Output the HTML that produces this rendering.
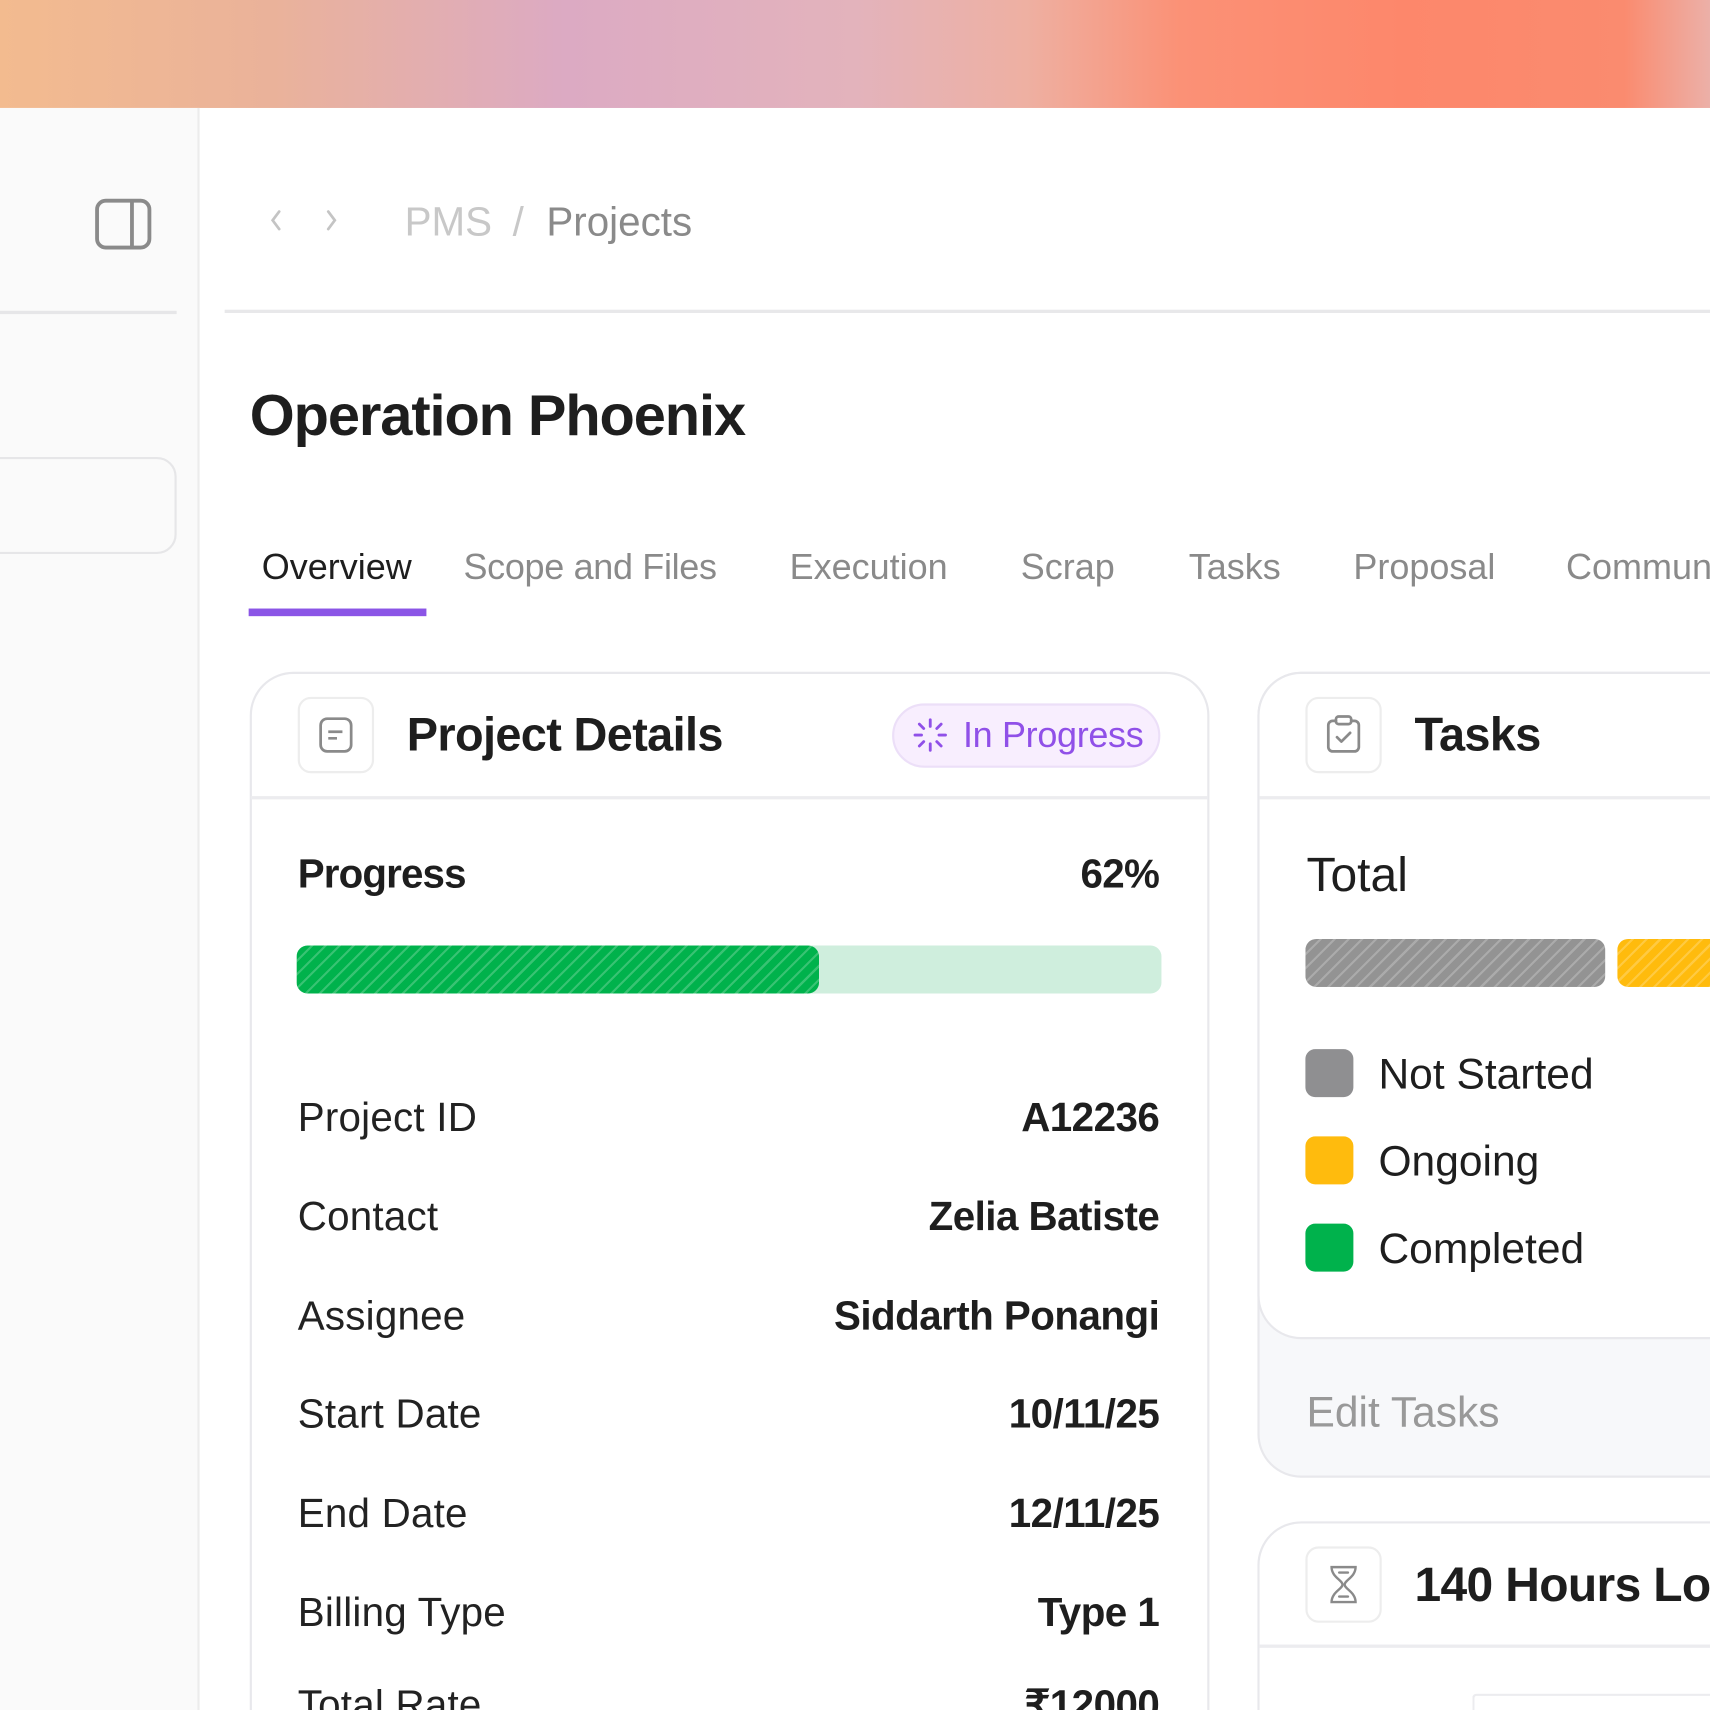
<!DOCTYPE html>
<html><head><meta charset="utf-8"><style>
*{box-sizing:border-box;margin:0;padding:0}
html,body{width:1710px;height:1710px;overflow:hidden;background:#fff}
#w{width:1568px;height:1568px;transform:scale(1.090561);transform-origin:0 0;position:relative;font-family:"Liberation Sans",sans-serif;color:#1e1e1e;overflow:hidden}
.a{position:absolute}
.grad{left:0;top:0;width:1568px;height:99px;background:linear-gradient(90deg,#f3bb8f 0%,#eab29a 16%,#dcaac3 33%,#e3b3bc 50%,#eeb0a2 60%,#fb9176 69%,#fd876b 82%,#fa8b6f 95%,#ecb0a8 100%)}
.side{left:0;top:99px;width:183px;height:1469px;background:#fafafa;border-right:2px solid #ececec}
.t{position:absolute;white-space:nowrap;line-height:1}
.b{font-weight:bold;letter-spacing:-0.6px}
.card{position:absolute;border:2px solid #e8e8ec;border-radius:40px;background:#fff}
.ib{position:absolute;width:70px;height:70px;border:2px solid #ededed;border-radius:12px;background:#fff}
.stripe{background-image:repeating-linear-gradient(135deg,rgba(255,255,255,.22) 0 2px,transparent 2px 9px)}
.lab{left:273px;font-size:37px;color:#222;letter-spacing:0.2px}
.val{right:505px;font-size:37px;font-weight:bold;color:#1e1e1e;text-align:right;letter-spacing:-0.5px}
</style></head><body><div id="w">
<div class="a grad"></div>
<div class="a side"></div>
<svg class="a" style="left:86px;top:181px" width="54" height="50" viewBox="0 0 54 50"><rect x="3" y="3" width="48" height="43" rx="8" fill="none" stroke="#8a8a8a" stroke-width="3.5"/><line x1="35" y1="3" x2="35" y2="46" stroke="#8a8a8a" stroke-width="3.5"/></svg>
<div class="a" style="left:0;top:285px;width:162px;height:3px;background:#e6e6e8"></div>
<div class="a" style="left:-30px;top:419px;width:192px;height:89px;border:2px solid #e6e6e8;border-radius:18px;background:#fafafa"></div>
<svg class="a" style="left:243px;top:190px" width="70" height="24" viewBox="0 0 70 24"><path d="M13 4 L7 12 L13 20" fill="none" stroke="#c4c4c4" stroke-width="2.5" stroke-linecap="round"/><path d="M58 4 L64 12 L58 20" fill="none" stroke="#c4c4c4" stroke-width="2.5" stroke-linecap="round"/></svg>
<div class="t" style="left:371px;top:185px;font-size:37px;color:#c8c8c8">PMS</div>
<div class="t" style="left:470px;top:185px;font-size:37px;color:#c8c8c8">/</div>
<div class="t" style="left:501px;top:185px;font-size:37px;color:#8a8a8a">Projects</div>
<div class="a" style="left:206px;top:284px;width:1362px;height:3px;background:#e8e8ea"></div>
<div class="t b" style="left:229px;top:355px;font-size:53px;letter-spacing:-1px;color:#1e1e1e">Operation Phoenix</div>
<div class="t" style="left:240px;top:503px;font-size:33px;color:#1e1e1e">Overview</div>
<div class="t" style="left:425px;top:503px;font-size:33px;color:#8a8a8a;letter-spacing:-0.3px">Scope and Files</div>
<div class="t" style="left:724px;top:503px;font-size:33px;color:#8a8a8a">Execution</div>
<div class="t" style="left:936px;top:503px;font-size:33px;color:#8a8a8a">Scrap</div>
<div class="t" style="left:1090px;top:503px;font-size:33px;color:#8a8a8a">Tasks</div>
<div class="t" style="left:1241px;top:503px;font-size:33px;color:#8a8a8a">Proposal</div>
<div class="t" style="left:1436px;top:503px;font-size:33px;color:#8a8a8a">Communication</div>
<div class="a" style="left:228px;top:558px;width:163px;height:7px;background:#8b55e6"></div>

<div class="card" style="left:229px;top:616px;width:880px;height:1000px"></div>
<div class="a" style="left:230px;top:730px;width:877px;height:3px;background:#ececef"></div>
<div class="ib" style="left:273px;top:639px"></div>
<svg class="a" style="left:290px;top:656px" width="36" height="36" viewBox="0 0 36 36"><rect x="4" y="3" width="28" height="30" rx="6" fill="none" stroke="#8a8a8a" stroke-width="2.5"/><line x1="11" y1="15" x2="24" y2="15" stroke="#8a8a8a" stroke-width="2.5"/><line x1="11" y1="21" x2="19" y2="21" stroke="#8a8a8a" stroke-width="2.5"/></svg>
<div class="t b" style="left:373px;top:653px;font-size:43px">Project Details</div>
<div class="a" style="left:818px;top:645px;width:246px;height:59px;background:#f8eefe;border:2px solid #ecdff8;border-radius:30px"></div>
<svg class="a" style="left:836px;top:657px" width="34" height="34" viewBox="0 0 34 34" stroke="#9050e8" stroke-width="2.6" stroke-linecap="round"><line x1="17" y1="3" x2="17" y2="9"/><line x1="17" y1="25" x2="17" y2="31"/><line x1="3" y1="17" x2="9" y2="17"/><line x1="25" y1="17" x2="31" y2="17"/><line x1="7" y1="7" x2="11" y2="11"/><line x1="23" y1="23" x2="27" y2="27"/><line x1="27" y1="7" x2="23" y2="11"/><line x1="7" y1="27" x2="11" y2="23"/></svg>
<div class="t" style="left:883px;top:657px;font-size:33px;color:#9050e8;letter-spacing:-0.3px">In Progress</div>
<div class="t b" style="left:273px;top:783px;font-size:37px;letter-spacing:-0.8px">Progress</div>
<div class="t b" style="right:505px;top:783px;font-size:37px">62%</div>
<div class="a" style="left:272px;top:867px;width:793px;height:44px;background:#cfeedd;border-radius:10px"></div>
<div class="a stripe" style="left:272px;top:867px;width:479px;height:44px;background-color:#00b24c;border-radius:10px"></div>
<div class="t lab" style="top:1006px">Project ID</div><div class="t val" style="top:1006px">A12236</div>
<div class="t lab" style="top:1097px">Contact</div><div class="t val" style="top:1097px">Zelia Batiste</div>
<div class="t lab" style="top:1188px">Assignee</div><div class="t val" style="top:1188px">Siddarth Ponangi</div>
<div class="t lab" style="top:1278px">Start Date</div><div class="t val" style="top:1278px">10/11/25</div>
<div class="t lab" style="top:1369px">End Date</div><div class="t val" style="top:1369px">12/11/25</div>
<div class="t lab" style="top:1460px">Billing Type</div><div class="t val" style="top:1460px">Type 1</div>
<div class="t lab" style="top:1545px">Total Rate</div><div class="t val" style="top:1545px">₹12000</div>

<div class="card" style="left:1153px;top:616px;width:500px;height:739px;background:#f7f8fa"></div>
<div class="card" style="left:1153px;top:616px;width:500px;height:612px"></div>
<div class="a" style="left:1155px;top:730px;width:420px;height:3px;background:#ececef"></div>
<div class="ib" style="left:1197px;top:639px"></div>
<svg class="a" style="left:1214px;top:655px" width="36" height="38" viewBox="0 0 36 38" fill="none" stroke="#8a8a8a" stroke-width="2.5" stroke-linecap="round" stroke-linejoin="round"><path d="M11 6 H8 a4 4 0 0 0 -4 4 V30 a4 4 0 0 0 4 4 H28 a4 4 0 0 0 4 -4 V10 a4 4 0 0 0 -4 -4 H25"/><rect x="11" y="2" width="14" height="7" rx="2.5"/><path d="M12 21 L16 25 L24 17"/></svg>
<div class="t b" style="left:1297px;top:653px;font-size:43px">Tasks</div>
<div class="t" style="left:1198px;top:781px;font-size:44px;font-weight:500">Total</div>
<div class="a stripe" style="left:1197px;top:861px;width:275px;height:44px;background-color:#939393;border-radius:10px"></div>
<div class="a stripe" style="left:1483px;top:861px;width:120px;height:44px;background-color:#ffbb0d;border-radius:10px"></div>
<div class="a" style="left:1197px;top:962px;width:44px;height:44px;background:#8f8f91;border-radius:9px"></div>
<div class="a" style="left:1197px;top:1042px;width:44px;height:44px;background:#ffbb0d;border-radius:9px"></div>
<div class="a" style="left:1197px;top:1122px;width:44px;height:44px;background:#00b24c;border-radius:9px"></div>
<div class="t" style="left:1264px;top:966px;font-size:39px">Not Started</div>
<div class="t" style="left:1264px;top:1046px;font-size:39px">Ongoing</div>
<div class="t" style="left:1264px;top:1126px;font-size:39px">Completed</div>
<div class="t" style="left:1198px;top:1276px;font-size:39px;color:#999">Edit Tasks</div>

<div class="card" style="left:1153px;top:1395px;width:500px;height:220px"></div>
<div class="a" style="left:1155px;top:1508px;width:413px;height:3px;background:#ececef"></div>
<div class="ib" style="left:1197px;top:1418px"></div>
<svg class="a" style="left:1214px;top:1434px" width="36" height="38" viewBox="0 0 36 38" fill="none" stroke="#8a8a8a" stroke-width="2.2" stroke-linecap="round"><path d="M7 3 H29 C29 12 19 15 19 19 C19 23 29 26 29 35 H7 C7 26 17 23 17 19 C17 15 7 12 7 3 Z"/><line x1="14" y1="8" x2="22" y2="8"/><line x1="14" y1="30" x2="22" y2="30"/></svg>
<div class="t b" style="left:1297px;top:1432px;font-size:44px">140 Hours Logged</div>
<div class="a" style="left:1350px;top:1553px;width:218px;height:15px;border:2px solid #ececef;border-bottom:none;border-right:none;border-radius:4px 0 0 0"></div>
</div></body></html>
